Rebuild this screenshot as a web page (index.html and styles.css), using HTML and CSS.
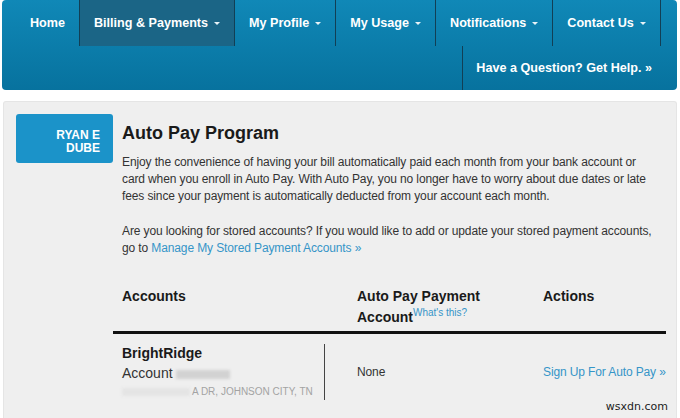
FILE: index.html
```html
<!DOCTYPE html>
<html lang="en">
<head>
<meta charset="utf-8">
<title>Auto Pay Program</title>
<link rel="stylesheet" href="styles.css">
</head>
<body>
<div class="page">
  <nav class="nav">
    <div class="nav-row nav-main">
      <a class="nav-item">Home</a>
      <a class="nav-item active">Billing &amp; Payments<span class="caret"></span></a>
      <a class="nav-item">My Profile<span class="caret"></span></a>
      <a class="nav-item">My Usage<span class="caret"></span></a>
      <a class="nav-item">Notifications<span class="caret"></span></a>
      <a class="nav-item">Contact Us<span class="caret"></span></a>
    </div>
    <div class="nav-row nav-sub">
      <a class="nav-help">Have a Question? Get Help. &raquo;</a>
    </div>
  </nav>

  <section class="panel">
    <div class="user-box">RYAN E<br>DUBE</div>
    <div class="main">
      <h1 class="title">Auto Pay Program</h1>
      <p class="text">Enjoy the convenience of having your bill automatically paid each month from your bank account or card when you enroll in Auto Pay. With Auto Pay, you no longer have to worry about due dates or late fees since your payment is automatically deducted from your account each month.</p>
      <p class="text text-gap">Are you looking for stored accounts? If you would like to add or update your stored payment accounts, go to <a class="link">Manage My Stored Payment Accounts &raquo;</a></p>

      <div class="table">
        <div class="thead">
          <div class="th c1">Accounts</div>
          <div class="th c2">Auto Pay Payment Account<sup class="sup-link">What's this?</sup></div>
          <div class="th c3">Actions</div>
        </div>
        <div class="trow">
          <div class="td c1 acct">
            <div class="acct-name">BrightRidge</div>
            <div class="acct-num">Account <span class="blur blur-num"></span></div>
            <div class="acct-addr"><span class="blur blur-addr"></span>A DR, JOHNSON CITY, TN</div>
          </div>
          <div class="td c2 cell-text">None</div>
          <div class="td c3 cell-text"><a class="link">Sign Up For Auto Pay &raquo;</a></div>
        </div>
      </div>
    </div>
  </section>
  <div class="watermark">wsxdn.com</div>
</div>
</body>
</html>
```

FILE: styles.css
```css
* { box-sizing: border-box; }
html, body { margin: 0; padding: 0; }
body {
  font-family: "Liberation Sans", Arial, sans-serif;
  background: #ffffff;
  color: #333;
  height: 418px;
  overflow: hidden;
}
.page {
  position: relative;
  height: 100%;
  display: flex;
  flex-direction: column;
}

/* NAV */
.nav {
  margin: 0 3px 0 2px;
  height: 90px;
  background: linear-gradient(#1088b7, #07729e);
  border-radius: 4px;
  display: flex;
  flex-direction: column;
  flex: none;
}
.nav-row { display: flex; }
.nav-main { height: 46px; padding-left: 14px; }
.nav-item {
  display: flex;
  align-items: center;
  padding: 0 14px;
  color: #fff;
  font-weight: bold;
  font-size: 12.6px;
  border-right: 1px solid #123f55;
  white-space: nowrap;
}
.nav-item.active { background: #1b6586; }
.caret {
  display: inline-block;
  margin-left: 6px;
  width: 0;
  height: 0;
  border-left: 3px solid transparent;
  border-right: 3px solid transparent;
  border-top: 3px solid #e8f3f8;
}
.nav-sub { height: 44px; justify-content: flex-end; padding-right: 12px; }
.nav-help {
  display: flex;
  align-items: center;
  padding: 0 13px;
  border-left: 1px solid #123f55;
  color: #fff;
  font-weight: bold;
  font-size: 12.6px;
  white-space: nowrap;
}

/* PANEL */
.panel {
  flex: 1;
  margin: 11px 3px 0 3px;
  background: #efefef;
  border: 1px solid #e5e5e5;
  border-bottom: none;
  border-radius: 3px 3px 0 0;
  padding: 12px 11px 0 12px;
  display: flex;
  align-items: flex-start;
}
.user-box {
  flex: none;
  width: 97px;
  height: 49px;
  background: #1b93c9;
  border-radius: 3px;
  color: #fff;
  font-weight: bold;
  font-size: 12px;
  line-height: 13px;
  text-align: right;
  padding: 15px 13px 0 0;
}
.main { flex: 1; padding-top: 8px; }
.title {
  margin: 0 0 10px 9px;
  font-size: 18px;
  line-height: 22px;
  font-weight: bold;
  color: #1a1a1a;
}
.text {
  margin: 0;
  padding: 0 8px 0 9px;
  font-size: 12px;
  line-height: 17px;
  letter-spacing: -0.12px;
  color: #333;
}
.text-gap { margin-top: 18px; }
.link { color: #3595c8; text-decoration: none; }

/* TABLE */
.table { margin-top: 29px; }
.thead, .trow {
  display: grid;
  grid-template-columns: 212px 209px 1fr;
}
.thead {
  border-bottom: 3px solid #111;
  padding-bottom: 3px;
}
.th {
  font-size: 14px;
  font-weight: bold;
  line-height: 21px;
  color: #1a1a1a;
}
.c1 { padding-left: 9px; }
.c2 { padding-left: 32px; }
.c3 { padding-left: 9px; }
.sup-link {
  font-size: 10px;
  font-weight: normal;
  color: #3595c8;
  vertical-align: 6px;
  line-height: 0;
}
.trow { padding-top: 10px; align-items: center; }
.acct { border-right: 1px solid #444; }
.acct-name { font-size: 14px; font-weight: bold; line-height: 19px; color: #1a1a1a; }
.acct-num { font-size: 14px; line-height: 20px; color: #333; }
.acct-addr {
  font-size: 10px;
  line-height: 17px;
  color: #a3a3a3;
  display: flex;
  align-items: center;
}
.blur {
  display: inline-block;
  filter: blur(1.5px);
}
.blur-num { width: 54px; height: 9px; background: #d2d2d2; vertical-align: -1px; }
.blur-addr { width: 68px; height: 8px; background: #e4e4e4; margin-right: 2px; }
.cell-text { font-size: 12px; line-height: 17px; color: #333; letter-spacing: -0.12px; white-space: nowrap; }

.watermark {
  position: absolute;
  right: 12px;
  bottom: 5px;
  font-family: "DejaVu Sans", sans-serif;
  font-size: 11px;
  color: #222;
}
```
